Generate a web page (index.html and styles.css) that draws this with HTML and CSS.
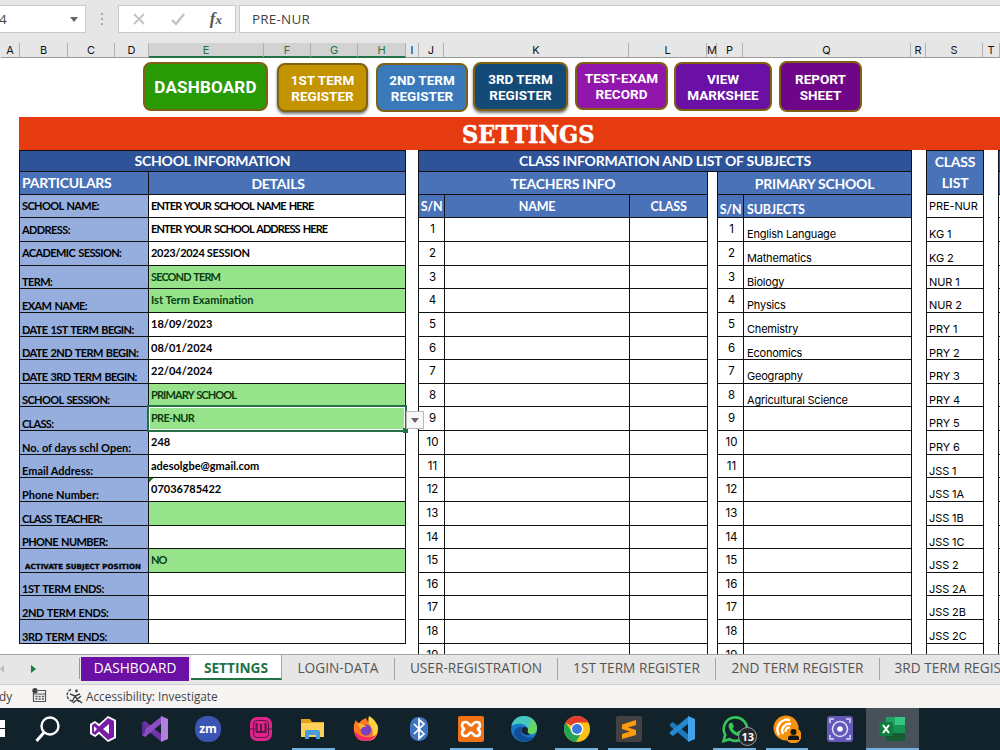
FILE: index.html
```html
<!DOCTYPE html>
<html lang="en">
  <head>
    <meta charset="UTF-8" />
    <title>Settings</title>
    <link rel="stylesheet" href="styles.css">
  </head>
  <body>
    <div class="formulaBar">
      <div class="nameBox"><span>4</span><i class="arrow"></i></div>
      <div class="dots"><i></i><i></i><i></i></div>
      <div class="fxBox">
        <svg width="14" height="14" viewBox="0 0 14 14"><path d="M2 2l10 10M12 2L2 12" stroke="#c3c3c3" stroke-width="1.8"/></svg>
        <svg width="16" height="14" viewBox="0 0 16 14"><path d="M2 8l4 4 8-10" fill="none" stroke="#c3c3c3" stroke-width="2.4"/></svg>
        <span class="fx">f<small>x</small></span>
      </div>
      <div class="formula">PRE-NUR</div>
    </div>
    <div class="letters" id="letters"></div>

    <div class="sheet">
      <div class="buttons">
        <a class="btn dash">DASHBOARD</a>
        <a class="btn first">1ST TERM<br>REGISTER</a>
        <a class="btn second">2ND TERM<br>REGISTER</a>
        <a class="btn third">3RD TERM<br>REGISTER</a>
        <a class="btn test">TEST-EXAM<br>RECORD</a>
        <a class="btn view">VIEW<br>MARKSHEE</a>
        <a class="btn report">REPORT<br>SHEET</a>
      </div>
      <div class="banner"><h1>SETTINGS</h1></div>

      <div class="tables">
        <div class="block school">
          <div class="head dark">SCHOOL INFORMATION</div>
          <div class="row head2"><div class="label">PARTICULARS</div><div class="detail">DETAILS</div></div>
          <div id="school"></div>
        </div>

        <div class="classInfo">
          <div class="head dark">CLASS INFORMATION AND LIST OF SUBJECTS</div>
          <div class="pair">
            <div class="block teachers">
              <div class="row head2">TEACHERS INFO</div>
              <div class="row head3"><div class="sn">S/N</div><div class="name">NAME</div><div class="cls">CLASS</div></div>
              <div id="teachers"></div>
            </div>
            <div class="block subjects">
              <div class="row head2">PRIMARY SCHOOL</div>
              <div class="row head3 low"><div class="sn">S/N</div><div class="subject">SUBJECTS</div></div>
              <div id="subjects"></div>
            </div>
          </div>
        </div>

        <div class="block classList">
          <div class="tallHead">CLASS<br>LIST</div>
          <div id="classes"></div>
        </div>

        <div class="block next">
          <div class="head dark"></div>
          <div class="row head2"></div>
          <div id="next"></div>
        </div>
      </div>
    </div>

    <div class="tabs">
      <div class="tabNav"><i class="prev"></i><i class="nextTab"></i></div>
      <div class="tab purple"><span>DASHBOARD</span></div>
      <div class="tab active"><span>SETTINGS</span></div>
      <div class="tab t1"><span>LOGIN-DATA</span></div>
      <div class="tab t2"><span>USER-REGISTRATION</span></div>
      <div class="tab t3"><span>1ST TERM REGISTER</span></div>
      <div class="tab t4"><span>2ND TERM REGISTER</span></div>
      <div class="tab t5"><span>3RD TERM REGISTER</span></div>
    </div>

    <div class="status">
      <span class="ready">dy</span>
      <svg class="macro" width="15" height="15" viewBox="0 0 15 15"><path d="M1.5 5v8.500h12V2.500H6M1.500 6h12" fill="none" stroke="#555" stroke-width="1.200"/><path d="M3.500 8.500h2M6.700 8.500h2M9.900 8.500h2M3.500 11h2M6.700 11h2M9.900 11h2" stroke="#555" stroke-width="1.300"/><circle cx="3" cy="2.700" r="2.700" fill="#444"/></svg>
      <svg class="access" width="18" height="16" viewBox="0 0 18 16"><path d="M6 1.500A6 6 0 0 0 7 13" fill="none" stroke="#555" stroke-width="1.500" stroke-dasharray="3 1.200"/><circle cx="11.500" cy="3" r="1.400" fill="#444"/><path d="M5 6l5 2 5-2M10 8l-3 6M10 8l4 6M9 8l8 7M16 8l-8 7" fill="none" stroke="#444" stroke-width="1.400"/></svg>
      <span class="accessText">Accessibility: Investigate</span>
    </div>

    <div class="taskbar">
      <div class="start"><i></i><i></i></div>
      <div class="app search"><svg viewBox="0 0 28 28"><circle cx="16" cy="11" r="8.500" fill="none" stroke="#fff" stroke-width="2.400"/><path d="M10 17.500L2.500 26" stroke="#fff" stroke-width="3"/></svg></div>
      <div class="app"><svg viewBox="0 0 28 28"><path d="M19 1l8 4v18l-8 4-9-8-4 3-5-3V9l5-3 4 3z" fill="#fff"/><path d="M19 3l6 3v16l-6 3-9-8.500-4 3.500-3-2V10l3-2 4 3.500z" fill="#7a1ba8"/><path d="M5 11l3 3-3 3zM20 9v10l-6-5z" fill="#fff"/></svg></div>
      <div class="app"><svg viewBox="0 0 28 28"><path d="M1 8l3-2 17 14v7L1 11z" fill="#7135a9"/><path d="M1 20l3 2L21 8V1L1 17z" fill="#8e4cc4"/><path d="M20 1l7 3v20l-7 3z" fill="#b180df"/><path d="M1 8l3 2v8l-3 2z" fill="#563090"/></svg></div>
      <div class="app"><svg viewBox="0 0 28 28"><rect x="1" y="1" width="26" height="26" rx="12" fill="#3b55b4"/><text x="14" y="18" class="zoomText">zm</text></svg></div>
      <div class="app"><svg viewBox="0 0 28 28"><rect x="3" y="2" width="22" height="24" rx="7" fill="#e0248c"/><rect x="6.500" y="5.500" width="15" height="17" rx="4" fill="none" stroke="#5b1745" stroke-width="1.100"/><path d="M9.500 8v9h9V8M14 9v8" fill="none" stroke="#5b1745" stroke-width="2"/><path d="M3 14h5M20 14h5" stroke="#5b1745"/></svg></div>
      <div class="app open"><svg viewBox="0 0 28 28"><path d="M2 4h9l2 3h12v6H2z" fill="#e3a21a"/><path d="M2 8h23v14H2z" fill="#fdd05a"/><path d="M6 24V17q0-2 2-2h11q2 0 2 2v7h-4v-4h-7v4z" fill="#4a9bdc"/></svg></div>
      <div class="app"><svg viewBox="0 0 28 28"><path d="M14 3q1 3 3 4 1-4 0-6 4 2 6 6 4 3 3 9-1 10-12 10T2 16Q1 9 4 5q1 3 3 3l3-3z" fill="#ff7a22"/><path d="M17 1q6 4 7 7 3 4 1 10-1 5-6 7 4-7 0-13-4-5-2-11z" fill="#ffd33f"/><path d="M2 16q1 10 12 10 7 0 11-7-5 4-12 3-6-1-11-6z" fill="#ee2c6b"/><circle cx="14" cy="15" r="5.500" fill="#7d3ec0"/><path d="M5 9q5-2 10 3-5-1-6 3z" fill="#ffae2e"/></svg></div>
      <div class="app"><svg viewBox="0 0 28 28"><rect x="5" y="2" width="18" height="24" rx="8.500" fill="#3f74c2"/><path d="M9 9l10 10-5 4.500v-19L19 9 9 19" fill="none" stroke="#fff" stroke-width="1.700"/></svg></div>
      <div class="app open"><svg viewBox="0 0 28 28"><rect x="1" y="1" width="26" height="26" rx="2" fill="#f07214"/><path d="M8.500 7C4 7 4 13 8 14c-4 1-4 7 .5 7 4 0 3-3.500 5.500-3.500s1.500 3.500 5.500 3.500c4.500 0 4.500-6 .5-7 4-1 4-7-.5-7-4 0-3 3.500-5.500 3.500S12.500 7 8.500 7z" fill="none" stroke="#fff" stroke-width="2.600"/></svg></div>
      <div class="app"><svg viewBox="0 0 28 28"><circle cx="14" cy="14" r="13" fill="#1976c9"/><path d="M1.500 11C3 4 8 1 14 1c8 0 13 6 13 12 0 5-4 7-8 6-3-1-1-3-1-5 0-4-9-8-16.500-3z" fill="#46c8c0"/><path d="M20 3c6 4 7 8 7 11-1 5-5 6-8 5-3-1-1-3-1-5 2-4 4-6 2-11z" fill="#69d660"/><path d="M12 12c-3 6 1 12 12 10-6 7-17 6-20-3 0-5 4-8 8-7z" fill="#124f96"/><path d="M12 13c2-2 6-1 6 2-1 3 1 4 3 4-5 3-11-1-9-6z" fill="#14262f"/></svg></div>
      <div class="app open"><svg viewBox="0 0 28 28"><circle cx="14" cy="14" r="13" fill="#fbc116"/><path d="M14 14L2.700 7.500A13 13 0 0 1 25.300 7.500H14z" fill="#e33b2e"/><path d="M2.700 7.500A13 13 0 0 0 13 27l6-10.500L14 14 9 17z" fill="#23a455"/><circle cx="14" cy="14" r="6.300" fill="#fff"/><circle cx="14" cy="14" r="5" fill="#3b78dc"/></svg></div>
      <div class="app open"><svg viewBox="0 0 28 28"><rect x="1" y="1" width="26" height="26" rx="2" fill="#424242"/><path d="M21 5v5l-8 2.500 8 2.500v5L7 24v-5l8-2.500L7 14V9.500z" fill="#ff9a0c"/></svg></div>
      <div class="app"><svg viewBox="0 0 28 28"><path d="M2 9l3-2 16 13v7L2 11z" fill="#1c78bd"/><path d="M2 19l3 2L21 8V1L2 17z" fill="#2489ce"/><path d="M20 1l7 3v20l-7 3z" fill="#3fa4ec"/></svg></div>
      <div class="app open"><svg viewBox="0 0 28 28"><path d="M2.500 26l1.700-6.200A11.700 11.700 0 1 1 8.500 24.200z" fill="none" stroke="#35c759" stroke-width="2.600"/><path d="M9 8l2-.5 2 4-1.500 2q2 3 4.500 4l2-2 4 2c0 3-3 4-5 3.500C12 20 8 15 7.500 11q.200-2 1.500-3z" fill="#35c759"/></svg><b class="badge">13</b></div>
      <div class="app open"><svg viewBox="0 0 28 28"><circle cx="13" cy="13" r="12.500" fill="#f7900b"/><path d="M6 20A10 10 0 0 1 17 5M10 19a7 7 0 0 1 8-10M13 17a3 3 0 0 1 4-4" fill="none" stroke="#fff" stroke-width="2.400"/><circle cx="20.500" cy="20.500" r="8" fill="#f7900b"/><circle cx="20.500" cy="17" r="3" fill="#151515"/><path d="M15 25v-2q0-2.500 3-2.500h5q3 0 3 2.500v2z" fill="#151515"/></svg></div>
      <div class="app"><svg viewBox="0 0 28 28"><rect x="1" y="1" width="26" height="26" rx="3" fill="#6459b8"/><circle cx="14" cy="14" r="7.500" fill="none" stroke="#ddd9fa" stroke-width="1.600"/><circle cx="14" cy="14" r="2.800" fill="#fff"/><path d="M4 8V4h4M20 4h4v4M24 20v4h-4M8 24H4v-4" fill="none" stroke="#ddd9fa" stroke-width="1.500"/></svg></div>
      <div class="app open current"><svg viewBox="0 0 28 28"><rect x="8" y="2" width="19" height="24" rx="1.500" fill="#159050"/><path d="M17 2h10v8H17z" fill="#35c681"/><path d="M8 2h9v8H8z" fill="#21a366"/><path d="M8 18h19v8H8z" fill="#185c37"/><path d="M17 10h10v8H17z" fill="#149652"/><rect x="1" y="7" width="14" height="14" rx="1" fill="#107c41"/><path d="M5 10l6 8M11 10l-6 8" stroke="#fff" stroke-width="2"/></svg></div>
    </div>

    <script>
      // column letter, width
      const cols = [['A',19],['B',48],['C',47],['D',34],['E',115,1],['F',47,1],['G',47,1],['H',48,1],['I',13],['J',25],['K',185],['L',78],['M',10],['P',26],['Q',168],['R',15],['S',57],['T',17]];

      const school = [
        ['SCHOOL NAME:', 'ENTER YOUR SCHOOL NAME HERE', 'mid'],
        ['ADDRESS:', 'ENTER YOUR SCHOOL ADDRESS HERE', 'mid'],
        ['ACADEMIC SESSION:', '2023/2024 SESSION', 'mid'],
        ['TERM:', 'SECOND TERM', 'green'],
        ['EXAM NAME:', 'Ist Term Examination', 'green'],
        ['DATE 1ST TERM BEGIN:', '18/09/2023', ''],
        ['DATE 2ND TERM BEGIN:', '08/01/2024', ''],
        ['DATE 3RD TERM BEGIN:', '22/04/2024', ''],
        ['SCHOOL SESSION:', 'PRIMARY SCHOOL', 'green'],
        ['CLASS:', 'PRE-NUR', 'green selected'],
        ['No. of days schl Open:', '248', ''],
        ['Email Address:', 'adesolgbe@gmail.com', ''],
        ['Phone Number:', '07036785422', 'flag'],
        ['CLASS TEACHER:', '', 'green'],
        ['PHONE NUMBER:', '', ''],
        ['ACTIVATE SUBJECT POSITION', 'NO', 'green tiny'],
        ['1ST TERM ENDS:', '', ''],
        ['2ND TERM ENDS:', '', ''],
        ['3RD TERM ENDS:', '', '']
      ];
      const subjects = ['English Language','Mathematics','Biology','Physics','Chemistry','Economics','Geography','Agricultural Science'];
      const classes = ['PRE-NUR','KG 1','KG 2','NUR 1','NUR 2','PRY 1','PRY 2','PRY 3','PRY 4','PRY 5','PRY 6','JSS 1','JSS 1A','JSS 1B','JSS 1C','JSS 2','JSS 2A','JSS 2B','JSS 2C',''];

      function fill(id, html){
        document.getElementById(id).innerHTML = html;
      }

      // capitals are set tighter than mixed text
      function text(t){
        const caps = /^[A-Z]/.test(t) && t === t.toUpperCase();
        const type = caps ? 'caps' : /^\d.*[A-Z]/.test(t) ? 'numCaps' : '';
        return `<span class="${type}">${t}</span>`;
      }

      fill('letters', cols.map(c => `<div class="${c[2] ? 'on' : ''}" style="width:${c[1]}px">${c[0]}</div>`).join(''));

      fill('school', school.map(r => {
        const extra = r[2].includes('selected') ? '<b class="handle"></b><b class="drop"><i class="arrow"></i></b>' : '';
        return `<div class="row ${r[2]}"><div class="label">${text(r[0])}</div><div class="detail">${text(r[1])}${extra}</div></div>`;
      }).join(''));

      let teacherRows = '';
      let subjectRows = '';
      for(let i = 1; i <= 19; i++){
        teacherRows += `<div class="row"><div class="sn">${i}</div><div class="name"></div><div class="cls"></div></div>`;
        subjectRows += `<div class="row"><div class="sn">${i}</div><div class="subject">${subjects[i-1] || ''}</div></div>`;
      }
      fill('teachers', teacherRows);
      fill('subjects', subjectRows);
      fill('classes', classes.map(c => `<div class="row">${c}</div>`).join(''));
      fill('next', '<div class="row"></div>'.repeat(20));
    </script>
  </body>
</html>
```
FILE: styles.css
```css
*{
  box-sizing: border-box;
}
body{
  margin: 0;
  width: 1000px;
  height: 750px;
  overflow: hidden;
  background-color: #fff;
  font-family: Lato, "Liberation Sans", sans-serif;
  display: flex;
  flex-direction: column;
}
.arrow{
  border: 4px solid transparent;
  border-top: 5px solid #666;
  border-bottom: none;
}

/* formula bar */
.formulaBar{
  height: 43px;
  flex: none;
  background-color: #e6e6e6;
  padding-top: 5px;
  display: flex;
  align-items: flex-start;
  font-family: "Open Sans", sans-serif;
  font-size: 13.500px;
  color: #444;
}
.nameBox, .fxBox, .formula{
  height: 28px;
  background-color: #fff;
  border: 1px solid #cacaca;
  display: flex;
  align-items: center;
}
.nameBox{
  width: 86px;
  border-left: none;
  justify-content: space-between;
  padding-right: 7px;
}
.nameBox span{
  margin-left: -1px;
}
.dots{
  width: 32px;
  height: 28px;
  display: flex;
  flex-direction: column;
  align-items: center;
  justify-content: center;
  gap: 3px;
}
.dots i{
  width: 2px;
  height: 2px;
  background-color: #aaa;
}
.fxBox{
  width: 118px;
  justify-content: space-between;
  padding: 0 13px;
}
.fx{
  font: italic bold 17px "Liberation Serif", serif;
  color: #555;
}
.fx small{
  font-size: 13px;
}
.formula{
  flex: 1;
  margin-left: 3px;
  padding-left: 12px;
  border-right: none;
  letter-spacing: 0.2px;
}
.letters{
  height: 15px;
  flex: none;
  background-color: #e6e6e6;
  padding-left: 1px;
  display: flex;
  font-family: Inter, sans-serif;
  font-size: 11px;
  line-height: 14px;
  color: #111;
}
.letters div{
  flex: none;
  text-align: center;
  border-right: 1px solid #b0b0b0;
  border-bottom: 1px solid #9a9a9a;
  overflow: hidden;
}
.letters div.on{
  background-color: #d2d2d2;
  color: #217346;
  border-bottom: 2px solid #217346;
}

/* sheet */
.sheet{
  height: 596px;
  flex: none;
  overflow: hidden;
}
.buttons{
  height: 59px;
  padding: 4px 0 0 143px;
  display: flex;
  align-items: flex-start;
}
.btn{
  flex: none;
  height: 49px;
  border: 2px solid #806112;
  border-radius: 8px;
  color: #fff;
  font: bold 13.500px/16px Roboto, sans-serif;
  text-align: center;
  display: flex;
  align-items: center;
  justify-content: center;
}
.dash{
  width: 125px;
  background-color: #289a06;
  font-size: 17px;
  letter-spacing: 0.200px;
}
.first{
  width: 91px;
  margin: 1px 0 0 9px;
  background-color: #c49400;
  box-shadow: 0 2px 3px #777;
}
.second{
  width: 92px;
  margin: 1px 0 0 8px;
  background-color: #3a7abb;
}
.third{
  width: 95px;
  margin-left: 5px;
  background-color: #134a77;
  box-shadow: 0 2px 3px #777;
}
.test{
  width: 93px;
  height: 48px;
  margin-left: 7px;
  background-color: #9116ab;
}
.view{
  width: 98px;
  margin-left: 6px;
  background-color: #6a10a4;
}
.report{
  width: 83px;
  height: 51px;
  margin: -1px 0 0 7px;
  background-color: #6f0687;
}
.banner{
  height: 33px;
  margin-left: 19px;
  background-color: #e63a10;
}
.banner h1{
  margin: 0;
  padding-left: 443px;
  font: bold 25px/35px "DejaVu Serif", serif;
  font-stretch: condensed;
  color: #fff;
  -webkit-text-stroke: 0.5px #fff;
}
.tables{
  display: flex;
  padding-left: 19px;
  align-items: flex-start;
}
.head{
  height: 22px;
  background-color: #2e5399;
  border-top: 1px solid #111;
  border-bottom: 1px solid #111;
  color: #fff;
  font-size: 14px;
  line-height: 20px;
  font-weight: bold;
  letter-spacing: -0.250px;
  text-align: center;
}
.block{
  flex: none;
  border-left: 1px solid #111;
  border-right: 1px solid #111;
  background-color: #fff;
}
.row{
  height: 23.630px;
  border-bottom: 1px solid #111;
  display: flex;
}
.head2, .head3{
  background-color: #4a72b9;
  color: #fff;
  font-weight: bold;
}
.head2{
  height: 22.800px;
  font-size: 14px;
  line-height: 24px;
  letter-spacing: -0.250px;
  justify-content: center;
}
.school{
  width: 387px;
}
.label{
  flex: none;
  width: 129px;
  border-right: 1px solid #111;
  background-color: #96aede;
  padding-left: 2px;
  font-size: 11px;
  font-weight: bold;
  line-height: 12px;
  white-space: nowrap;
  display: flex;
  align-items: flex-end;
}
.label .caps{
  letter-spacing: -0.600px;
  word-spacing: 1px;
}
.label .numCaps{
  letter-spacing: -0.450px;
  word-spacing: 1px;
}
.mid .label{
  align-items: center;
}
.detail{
  flex: 1;
  padding-left: 2px;
  font-size: 11px;
  font-weight: bold;
  line-height: 22px;
}
.detail .caps{
  letter-spacing: -0.900px;
  word-spacing: 1.200px;
}
.detail .numCaps{
  letter-spacing: -0.300px;
}
.head2 .label, .head2 .detail{
  background: none;
  font-size: 14px;
  line-height: 24px;
}
.head2 .label{
  align-items: center;
}
.head2 .detail{
  text-align: center;
}
.green .detail{
  background-color: #97e38c;
  color: #0b3d12;
}
.selected .caps{
  letter-spacing: -0.700px;
}
.tiny .label{
  padding-left: 5px;
  font: bold 7px/10px "DejaVu Sans", sans-serif;
  -webkit-text-stroke: 0.4px #111;
}
.tiny .label .caps{
  letter-spacing: 0.100px;
  word-spacing: 0;
}
.flag .detail{
  background-image: linear-gradient(135deg, #138a13 3px, transparent 3px);
}
.selected .detail{
  position: relative;
  outline: 2px solid #217346;
  box-shadow: inset 0 0 0 1px #fff;
}
.handle{
  position: absolute;
  right: -3px;
  bottom: -3px;
  width: 5px;
  height: 5px;
  background-color: #217346;
}
.drop{
  position: absolute;
  left: 257px;
  top: 4px;
  width: 18px;
  height: 18px;
  background-color: #f8f8f8;
  border: 1px solid #bbb;
  display: flex;
  align-items: center;
  justify-content: center;
  z-index: 2;
}

.classInfo{
  flex: none;
  width: 494px;
  margin-left: 12px;
}
.classInfo .head{
  border-left: 1px solid #111;
  border-right: 1px solid #111;
}
.pair{
  display: flex;
  justify-content: space-between;
}
.teachers{
  width: 290px;
}
.subjects{
  width: 195px;
}
.sn{
  flex: none;
  width: 26px;
  border-right: 1px solid #111;
  text-align: center;
  font: 11.500px/23px Inter, sans-serif;
  padding-left: 2px;
}
.name{
  flex: none;
  width: 185px;
  border-right: 1px solid #111;
  text-align: center;
}
.cls{
  flex: 1;
  text-align: center;
}
.head3{
  font-size: 12.500px;
  line-height: 24px;
  letter-spacing: -0.200px;
}
.head3 .sn{
  font: inherit;
  padding-left: 0;
}
.low{
  line-height: 30px;
}
.subject{
  padding-left: 3px;
  font: 11px/33px Inter, sans-serif;
  letter-spacing: -0.200px;
}
.head3 .subject{
  font: inherit;
}
.classList{
  width: 58px;
  margin-left: 14px;
  border-top: 1px solid #111;
}
.tallHead{
  height: 43.800px;
  background-color: #4a72b9;
  border-bottom: 1px solid #111;
  color: #fff;
  font-size: 14px;
  font-weight: bold;
  letter-spacing: -0.200px;
  line-height: 21px;
  text-align: center;
}
.classList .row{
  padding-left: 2px;
  font: 11px/33px Inter, sans-serif;
  letter-spacing: -0.100px;
  white-space: pre;
}
.classList .row:first-child{
  line-height: 23px;
}
.next{
  width: 20px;
  margin-left: 14px;
}

/* sheet tabs */
.tabs{
  height: 31px;
  flex: none;
  background-color: #e6e6e6;
  border-top: 1px solid #a5a5a5;
  border-bottom: 1px solid #d0d0d0;
  display: flex;
  overflow: hidden;
  font-family: "Open Sans", sans-serif;
  font-size: 13.700px;
  color: #555;
}
.tabNav{
  flex: none;
  width: 80px;
  height: 21px;
  margin-top: 3px;
  border-right: 1px solid #999;
  display: flex;
  align-items: center;
}
.prev{
  border: 4px solid transparent;
  border-right: 4px solid #bbb;
  border-left: none;
}
.nextTab{
  margin-left: 27px;
  border: 4px solid transparent;
  border-left: 5px solid #107c41;
  border-right: none;
}
.tab{
  flex: none;
  height: 22px;
  margin-top: 3px;
  line-height: 20px;
  border-right: 1px solid #a5a5a5;
  text-align: center;
  white-space: nowrap;
}
.purple{
  width: 108px;
  height: 24px;
  margin: 2px 2px 0 1px;
  background-color: #6a10a4;
  color: #fff;
  border: none;
  line-height: 22px;
}
.active{
  width: 91px;
  height: 26px;
  margin-top: -1px;
  line-height: 27px;
  background-color: #fff;
  border-bottom: 2px solid #217346;
  color: #217346;
  font-weight: bold;
}
.t1{
  width: 113px;
}
.t2{
  width: 163px;
}
.t3{
  width: 158px;
}
.t4{
  width: 164px;
}
.t5{
  width: 160px;
}

.status{
  height: 23px;
  flex: none;
  background-color: #f5f4f2;
  display: flex;
  align-items: center;
  font-family: "Open Sans", sans-serif;
  font-size: 11.800px;
  line-height: 20px;
  padding-bottom: 2px;
  color: #444;
}
.ready{
  width: 33px;
  margin-left: -1px;
}
.access{
  margin-left: 18px;
}
.accessText{
  margin-left: 3px;
}

/* taskbar */
.taskbar{
  flex: 1;
  background-color: #12222b;
  display: flex;
}
.start{
  flex: none;
  width: 20px;
  padding-top: 12px;
}
.start i{
  display: block;
  width: 5px;
  height: 8px;
  margin-bottom: 1px;
  background-color: #fff;
}
.app{
  position: relative;
  flex: none;
  width: 52.650px;
  display: flex;
  align-items: center;
  justify-content: center;
}
.search{
  width: 56.500px;
}
.app svg{
  width: 28px;
  height: 28px;
}
.open::after{
  content: "";
  position: absolute;
  left: 5px;
  right: 5px;
  bottom: 0;
  height: 2px;
  background-color: #76b0dc;
}
.current{
  background-color: #465159;
}
.current::after{
  left: 0;
  right: 0;
}
.zoomText{
  fill: #fff;
  font: bold 12px "Open Sans", sans-serif;
  text-anchor: middle;
}
.badge{
  position: absolute;
  left: 30px;
  top: 19px;
  width: 19px;
  height: 19px;
  border: 1px solid #999;
  border-radius: 50%;
  background-color: #26292c;
  color: #fff;
  font: bold 11px/17px "Open Sans", sans-serif;
  text-align: center;
}
```
